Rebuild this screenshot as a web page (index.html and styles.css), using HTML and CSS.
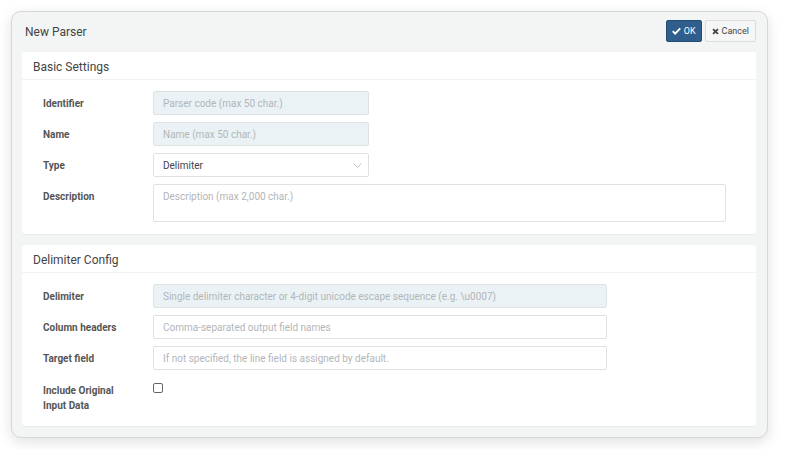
FILE: index.html
```html
<!DOCTYPE html>
<html lang="en">
<head>
    <meta charset="UTF-8">
    <meta name="viewport" content="width=device-width, initial-scale=1.0">
    <title>New Parser</title>
    <link rel="stylesheet" href="styles.css">
</head>
<body>

    <div class="dialog">
        <!-- Dialog header -->
        <div class="dialog-head">
            <span class="dialog-title">New Parser</span>
            <div class="actions">
                <button class="btn btn-ok">
                    <svg width="9" height="8" viewBox="0 0 12 10"><path d="M1 5.2l3.2 3.3L11 1.5" fill="none" stroke="#fff" stroke-width="2.6"/></svg>
                    OK
                </button>
                <button class="btn btn-cancel">
                    <svg width="7" height="7" viewBox="0 0 10 10"><path d="M1.5 1.5l7 7M8.5 1.5l-7 7" stroke="#444" stroke-width="2.6"/></svg>
                    Cancel
                </button>
            </div>
        </div>

        <!-- Basic Settings -->
        <div class="panel">
            <div class="panel-head">Basic Settings</div>
            <div class="panel-body">
                <div class="row">
                    <label class="label">Identifier</label>
                    <input class="field field-short required" placeholder="Parser code (max 50 char.)">
                </div>
                <div class="row">
                    <label class="label">Name</label>
                    <input class="field field-short required" placeholder="Name (max 50 char.)">
                </div>
                <div class="row">
                    <label class="label">Type</label>
                    <div class="field field-short select">
                        <span>Delimiter</span>
                        <svg width="9" height="5" viewBox="0 0 9 5"><path d="M0.5 0.5l4 4 4-4" fill="none" stroke="#bbb" stroke-width="0.9"/></svg>
                    </div>
                </div>
                <div class="row">
                    <label class="label">Description</label>
                    <textarea class="field field-wide area" placeholder="Description (max 2,000 char.)"></textarea>
                </div>
            </div>
        </div>

        <!-- Delimiter Config -->
        <div class="panel">
            <div class="panel-head">Delimiter Config</div>
            <div class="panel-body">
                <div class="row">
                    <label class="label">Delimiter</label>
                    <input class="field field-mid required" placeholder="Single delimiter character or 4-digit unicode escape sequence (e.g. \u0007)">
                </div>
                <div class="row">
                    <label class="label">Column headers</label>
                    <input class="field field-mid" placeholder="Comma-separated output field names">
                </div>
                <div class="row">
                    <label class="label">Target field</label>
                    <input class="field field-mid" placeholder="If not specified, the line field is assigned by default.">
                </div>
                <div class="row row-check">
                    <label class="label">Include Original<br>Input Data</label>
                    <input type="checkbox" class="check">
                </div>
            </div>
        </div>
    </div>

</body>
</html>
```

FILE: styles.css
```css
body {
    margin: 0;
    padding: 0;
    background: #fff;
    font-family: Roboto, "Liberation Sans", Arial, sans-serif;
    color: #444;
}
.dialog {
    margin: 11px;
    width: 757px;
    background: #f3f4f4;
    border: 1px solid #d6d8d8;
    border-radius: 10px;
    box-shadow: 0 4px 14px rgba(0, 0, 0, 0.12);
    padding: 0 11px 0 10px;
    box-sizing: border-box;
}
.dialog-head {
    height: 40px;
    display: flex;
    align-items: center;
    justify-content: space-between;
    padding-left: 3px;
}
.dialog-title {
    font-size: 12px;
    color: #444;
}
.actions {
    display: flex;
    gap: 3px;
    margin-top: -2px;
}
.btn {
    height: 22px;
    font-family: inherit;
    font-size: 9px;
    border-radius: 2px;
    display: flex;
    align-items: center;
    gap: 3px;
    cursor: pointer;
}
.btn-ok {
    background: #2f5e8d;
    border: 1px solid #254c73;
    color: #fff;
    padding: 0 5px;
}
.btn-cancel {
    background: #f6f6f6;
    border: 1px solid #dcdcdc;
    color: #444;
    padding: 0 6px;
}
.panel {
    background: #fff;
    border-radius: 3px;
    box-shadow: 0 1px 1px rgba(0, 0, 0, 0.04);
    margin-bottom: 11px;
}
.panel-head {
    height: 27px;
    line-height: 30px;
    padding-left: 11px;
    font-size: 12px;
    color: #444;
    border-bottom: 1px solid #f1f2f2;
}
.panel-body {
    padding: 11px 21px 12px;
    display: flex;
    flex-direction: column;
    gap: 7px;
}
.row {
    display: flex;
    align-items: flex-start;
}
.label {
    width: 110px;
    flex-shrink: 0;
    font-size: 10px;
    font-weight: 700;
    color: #555;
    line-height: 15px;
    padding-top: 5px;
}
.field {
    height: 24px;
    box-sizing: border-box;
    border: 1px solid #dfe2e3;
    border-radius: 2px;
    padding: 0 9px;
    font-family: inherit;
    font-size: 10px;
    color: #444;
    background: #fff;
    outline: none;
}
.field::placeholder {
    color: #b3b6b8;
}
.required {
    background: #eaf2f5;
}
.field-short {
    width: 216px;
}
.field-mid {
    width: 454px;
}
.field-wide {
    width: 573px;
}
.select {
    display: flex;
    align-items: center;
    justify-content: space-between;
    padding-right: 6px;
}
.area {
    height: 38px;
    padding-top: 5px;
    resize: none;
    line-height: 13px;
    display: block;
}
.row-check {
    height: 36px;
    padding-top: 1px;
}
.check {
    appearance: none;
    margin: 5px 0 0;
    width: 10px;
    height: 10px;
    border: 1px solid #666;
    border-radius: 2px;
    background: #fff;
}
```
